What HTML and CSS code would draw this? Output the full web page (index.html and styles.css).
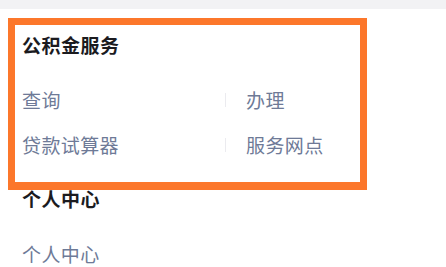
FILE: index.html
```html
<!DOCTYPE html>
<html lang="zh-CN">
<head>
<meta charset="utf-8">
<link rel="stylesheet" href="styles.css">
</head>
<body>
<div class="topband"></div>
<main class="page">
  <section class="section">
    <h2 class="section-title">公积金服务</h2>
    <div class="grid">
      <div class="cell">查询</div>
      <div class="cell cell-right"><span class="divider"></span>办理</div>
      <div class="cell">贷款试算器</div>
      <div class="cell cell-right"><span class="divider"></span>服务网点</div>
    </div>
  </section>
  <section class="section">
    <h2 class="section-title">个人中心</h2>
    <div class="grid">
      <div class="cell">个人中心</div>
    </div>
  </section>
</main>
<div class="highlight"></div>
</body>
</html>
```

FILE: styles.css
```css
html, body {
  margin: 0;
  padding: 0;
  background: #ffffff;
}
body {
  font-family: "Noto Sans CJK SC", "Noto Sans", sans-serif;
  position: relative;
  width: 446px;
  height: 267px;
  overflow: hidden;
}
.topband {
  height: 9px;
  background: #f2f2f4;
}
.page {
  padding: 0 22px;
}
.section {
  padding-top: 19px;
}
.section:first-child {
  padding-top: 23px;
}
.section-title {
  margin: 0 0 19px 0;
  font-size: 19px;
  line-height: 26px;
  font-weight: 700;
  color: #1b1b1f;
  letter-spacing: 0.5px;
}
.grid {
  display: grid;
  grid-template-columns: 203px 1fr;
}
.cell {
  height: 45px;
  line-height: 45px;
  font-size: 19px;
  color: #6e7a97;
  letter-spacing: 0.4px;
  display: flex;
  align-items: center;
}
.divider {
  display: inline-block;
  width: 1px;
  height: 14px;
  background: #ebebef;
  margin-right: 20px;
}
.highlight {
  position: absolute;
  left: 8px;
  top: 18px;
  width: 359px;
  height: 172px;
  box-sizing: border-box;
  border: 7px solid #fc772b;
  border-bottom-width: 8px;
  pointer-events: none;
}
```
